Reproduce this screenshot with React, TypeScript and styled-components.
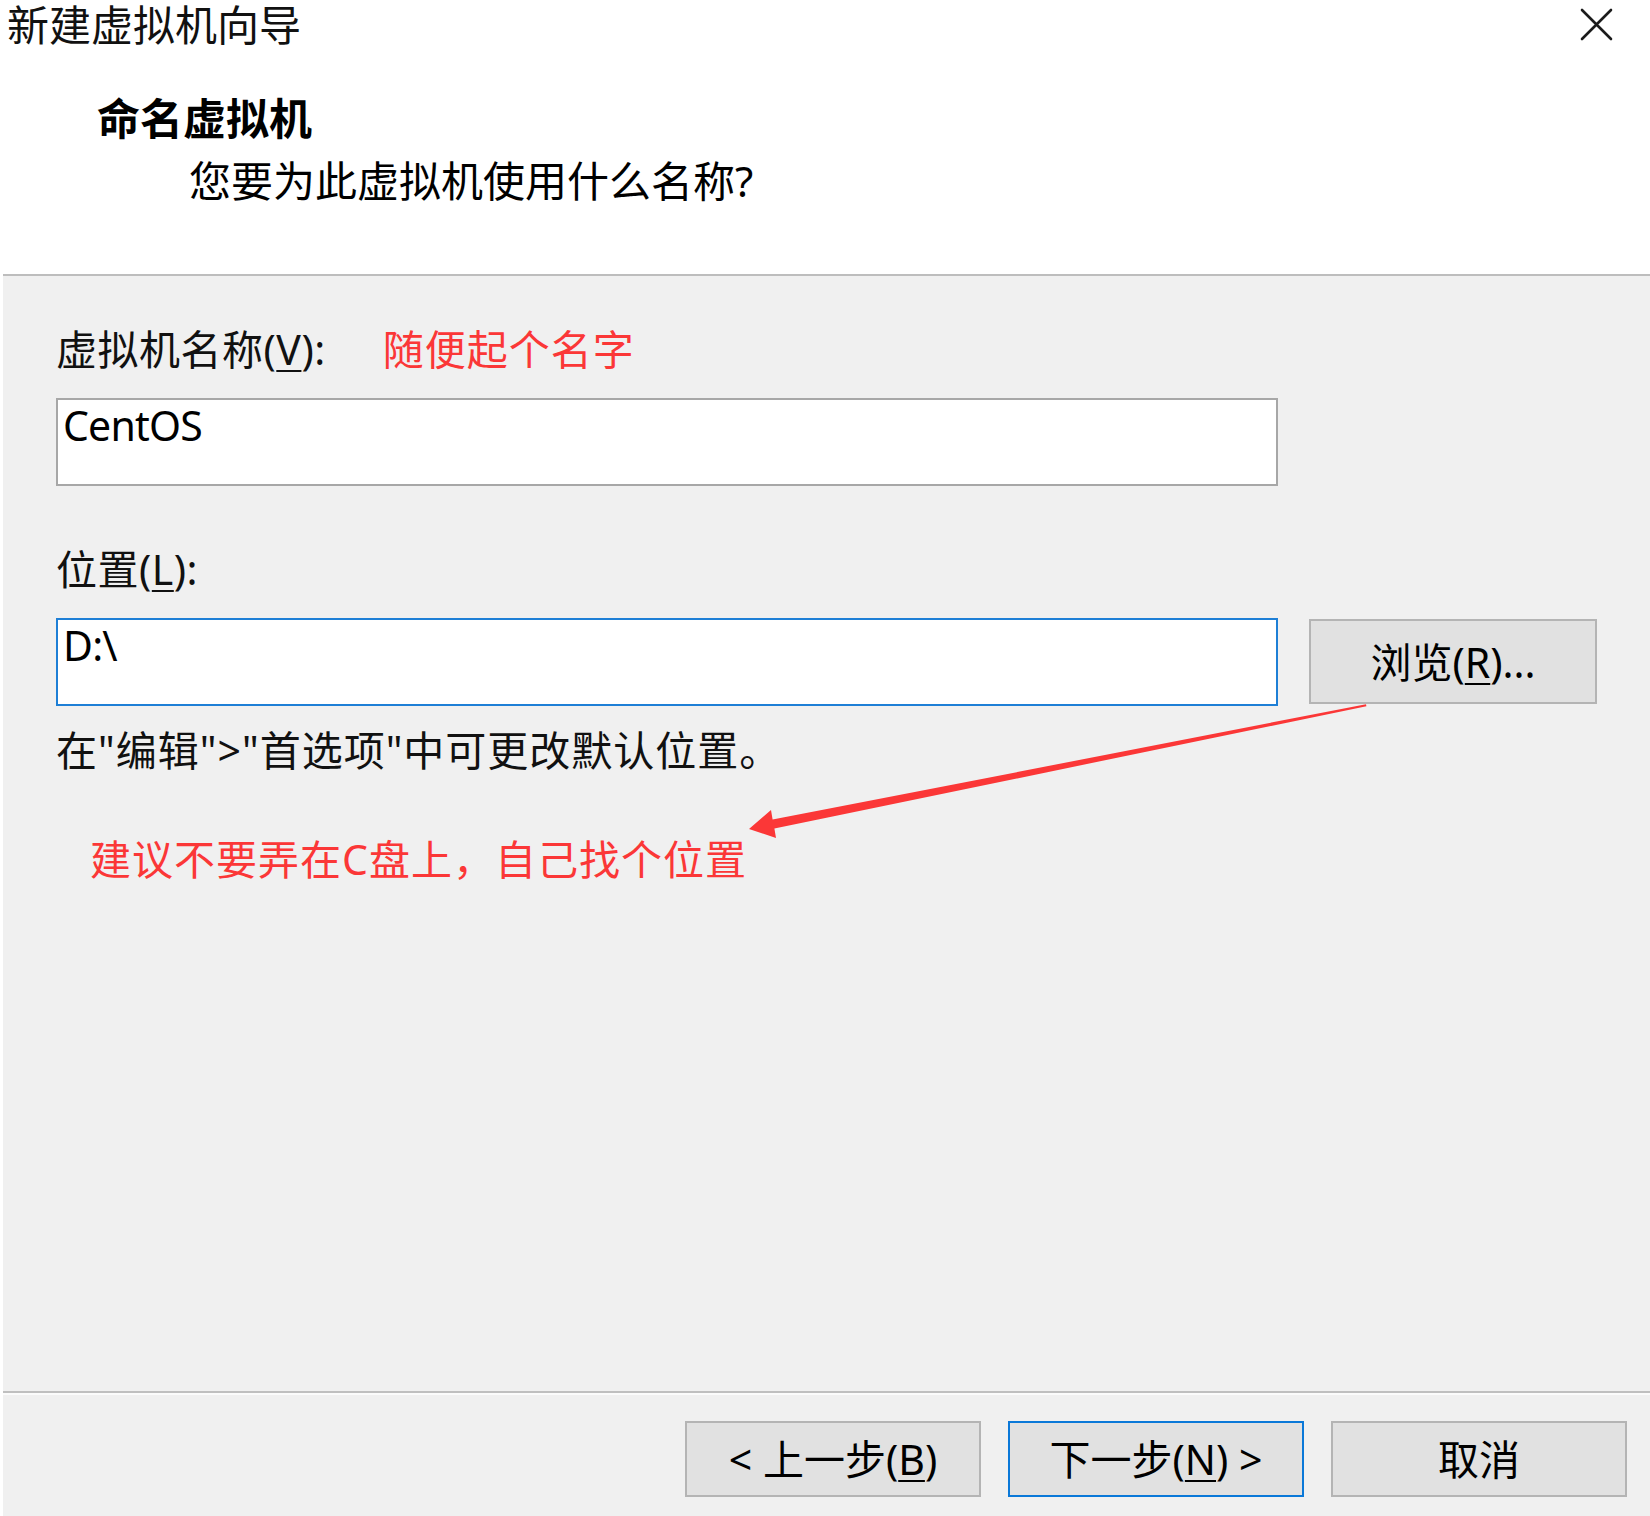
import React from "react";
import styled, { createGlobalStyle } from "styled-components";

const GlobalStyle = createGlobalStyle`
  html, body {
    margin: 0;
    padding: 0;
    background: #ffffff;
  }
  body {
    font-family: "Noto Sans", "Noto Sans CJK SC", sans-serif;
    color: #000;
  }
`;

const Window = styled.div`
  position: relative;
  display: flex;
  flex-direction: column;
  width: 1650px;
  height: 1516px;
  padding-left: 3px;
  box-sizing: border-box;
  background: #ffffff;
  overflow: hidden;
`;

const Header = styled.header`
  display: flex;
  flex-direction: column;
  height: 276px;
  box-sizing: border-box;
  border-bottom: 2px solid #bdbdbd;
  background: #ffffff;
`;

const TitleRow = styled.div`
  display: flex;
  justify-content: space-between;
  align-items: flex-start;
  padding-right: 37px;
`;

const Title = styled.h1`
  margin: 3px 0 0 4px;
  font-size: 42px;
  line-height: 44px;
  font-weight: 400;
  color: #111;
`;

const CloseButton = styled.button`
  display: flex;
  margin-top: 8px;
  padding: 0;
  border: none;
  background: transparent;
  cursor: pointer;
`;

const Heading = styled.h2`
  margin: 48px 0 0 94px;
  font-size: 43px;
  line-height: 48px;
  font-weight: 700;
`;

const SubHeading = styled.p`
  margin: 14px 0 0 186px;
  font-size: 42px;
  line-height: 48px;
  font-weight: 400;
`;

const Body = styled.main`
  flex: 1;
  display: flex;
  flex-direction: column;
  align-items: flex-start;
  padding: 49px 0 0 53px;
  background: #f0f0f0;
`;

const LabelRow = styled.div<{ $top?: number }>`
  display: flex;
  align-items: baseline;
  margin-top: ${(p) => p.$top ?? 0}px;
`;

const Label = styled.label`
  font-size: 41px;
  line-height: 48px;
  letter-spacing: 0.5px;
  color: #111;

  u {
    text-decoration-thickness: 2px;
    text-underline-offset: 5px;
  }
`;

const Remark = styled.span<{ $indent?: number }>`
  margin-left: ${(p) => p.$indent ?? 0}px;
  font-size: 41px;
  line-height: 48px;
  letter-spacing: 1px;
  color: #fb3737;
`;

const FieldRow = styled.div<{ $top?: number }>`
  display: flex;
  align-items: flex-start;
  gap: 31px;
  margin-top: ${(p) => p.$top ?? 0}px;
`;

const Field = styled.input<{ $focused?: boolean }>`
  width: 1222px;
  height: 88px;
  box-sizing: border-box;
  margin: 0;
  padding: 3px 6px 37px 5px;
  border: 2px solid ${(p) => (p.$focused ? "#1e7fd6" : "#a7a7a7")};
  border-radius: 0;
  outline: none;
  background: #ffffff;
  font-family: "Noto Sans", "Noto Sans CJK SC", sans-serif;
  font-size: 41px;
  line-height: 44px;
  letter-spacing: -0.8px;
  color: #000;
`;

const Button = styled.button<{ $primary?: boolean }>`
  display: flex;
  align-items: center;
  justify-content: center;
  box-sizing: border-box;
  margin: 0;
  padding: 0;
  border: 2px solid ${(p) => (p.$primary ? "#0a78d8" : "#b4b4b4")};
  border-radius: 0;
  background: #e1e1e1;
  font-family: "Noto Sans", "Noto Sans CJK SC", sans-serif;
  font-size: 41px;
  line-height: 48px;
  color: #000;
  cursor: pointer;

  u {
    text-decoration-thickness: 2px;
    text-underline-offset: 5px;
  }
`;

const BrowseButton = styled(Button)`
  width: 288px;
  height: 85px;
  margin-top: 1px;
`;

const Hint = styled.p`
  margin: 20px 0 0 0;
  font-size: 41px;
  line-height: 48px;
  letter-spacing: 1px;
  color: #111;
`;

const Note = styled(Remark)`
  margin-top: 61px;
`;

const Footer = styled.footer`
  display: flex;
  justify-content: flex-end;
  gap: 27px;
  height: 125px;
  box-sizing: border-box;
  padding: 28px 23px 0 0;
  border-top: 2px solid #bfbfbf;
  box-shadow: inset 0 2px 0 #fbfbfb;
  background: #f0f0f0;
`;

const NavButton = styled(Button)`
  width: 296px;
  height: 76px;
`;

const Arrow = styled.svg`
  position: absolute;
  left: 740px;
  top: 695px;
  width: 640px;
  height: 150px;
  pointer-events: none;
`;

const CloseIcon = () => (
  <svg width="33" height="33" viewBox="0 0 33 33">
    <path
      d="M2 2 L31 31 M31 2 L2 31"
      stroke="#1b1b1b"
      strokeWidth="2.6"
      strokeLinecap="round"
      fill="none"
    />
  </svg>
);

export default function App() {
  return (
    <>
      <GlobalStyle />
      <Window>
        <Header>
          <TitleRow>
            <Title>新建虚拟机向导</Title>
            <CloseButton aria-label="关闭">
              <CloseIcon />
            </CloseButton>
          </TitleRow>
          <Heading>命名虚拟机</Heading>
          <SubHeading>您要为此虚拟机使用什么名称?</SubHeading>
        </Header>

        <Body>
          <LabelRow>
            <Label htmlFor="vm-name">
              虚拟机名称(<u>V</u>):
            </Label>
            <Remark $indent={57}>随便起个名字</Remark>
          </LabelRow>
          <FieldRow $top={25}>
            <Field id="vm-name" readOnly value="CentOS" />
          </FieldRow>

          <LabelRow $top={59}>
            <Label htmlFor="vm-location">
              位置(<u>L</u>):
            </Label>
          </LabelRow>
          <FieldRow $top={25}>
            <Field id="vm-location" readOnly value="D:\" $focused />
            <BrowseButton>
              浏览(<u>R</u>)...
            </BrowseButton>
          </FieldRow>

          <Hint>在"编辑"&gt;"首选项"中可更改默认位置。</Hint>
          <Note $indent={34}>建议不要弄在C盘上，自己找个位置</Note>
        </Body>

        <Footer>
          <NavButton>
            &lt; 上一步(<u>B</u>)
          </NavButton>
          <NavButton $primary>
            下一步(<u>N</u>) &gt;
          </NavButton>
          <NavButton>取消</NavButton>
        </Footer>

        <Arrow viewBox="740 695 640 150">
          <polygon
            points="749,829 771,810 772.6,819.6 1366,704.2 1366.4,706.2 774.4,828.6 776,838"
            fill="#fb3737"
          />
        </Arrow>
      </Window>
    </>
  );
}
